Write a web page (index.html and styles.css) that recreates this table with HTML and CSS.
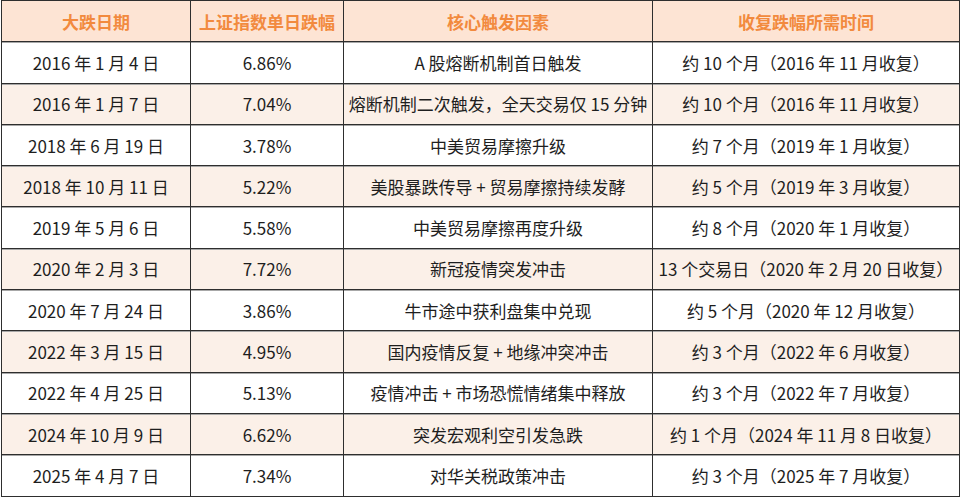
FILE: index.html
```html
<!DOCTYPE html>
<html lang="zh-CN">
<head>
<meta charset="utf-8">
<title>A股大跌统计</title>
<link rel="stylesheet" href="styles.css">
</head>
<body>
<table class="crash-table">
  <colgroup>
    <col class="c1"><col class="c2"><col class="c3"><col class="c4">
  </colgroup>
  <thead>
    <tr><th>大跌日期</th><th>上证指数单日跌幅</th><th>核心触发因素</th><th>收复跌幅所需时间</th></tr>
  </thead>
  <tbody>
    <tr><td>2016 年 1 月 4 日</td><td>6.86%</td><td>A 股熔断机制首日触发</td><td>约 10 个月（2016 年 11 月收复）</td></tr>
    <tr class="alt"><td>2016 年 1 月 7 日</td><td>7.04%</td><td>熔断机制二次触发，全天交易仅 15 分钟</td><td>约 10 个月（2016 年 11 月收复）</td></tr>
    <tr><td>2018 年 6 月 19 日</td><td>3.78%</td><td>中美贸易摩擦升级</td><td>约 7 个月（2019 年 1 月收复）</td></tr>
    <tr class="alt"><td>2018 年 10 月 11 日</td><td>5.22%</td><td>美股暴跌传导 + 贸易摩擦持续发酵</td><td>约 5 个月（2019 年 3 月收复）</td></tr>
    <tr><td>2019 年 5 月 6 日</td><td>5.58%</td><td>中美贸易摩擦再度升级</td><td>约 8 个月（2020 年 1 月收复）</td></tr>
    <tr class="alt"><td>2020 年 2 月 3 日</td><td>7.72%</td><td>新冠疫情突发冲击</td><td>13 个交易日（2020 年 2 月 20 日收复）</td></tr>
    <tr><td>2020 年 7 月 24 日</td><td>3.86%</td><td>牛市途中获利盘集中兑现</td><td>约 5 个月（2020 年 12 月收复）</td></tr>
    <tr class="alt"><td>2022 年 3 月 15 日</td><td>4.95%</td><td>国内疫情反复 + 地缘冲突冲击</td><td>约 3 个月（2022 年 6 月收复）</td></tr>
    <tr><td>2022 年 4 月 25 日</td><td>5.13%</td><td>疫情冲击 + 市场恐慌情绪集中释放</td><td>约 3 个月（2022 年 7 月收复）</td></tr>
    <tr class="alt"><td>2024 年 10 月 9 日</td><td>6.62%</td><td>突发宏观利空引发急跌</td><td>约 1 个月（2024 年 11 月 8 日收复）</td></tr>
    <tr><td>2025 年 4 月 7 日</td><td>7.34%</td><td>对华关税政策冲击</td><td>约 3 个月（2025 年 7 月收复）</td></tr>
  </tbody>
</table>
</body>
</html>
```

FILE: styles.css
```css
html, body {
  margin: 0;
  padding: 0;
  background: #ffffff;
}

.crash-table {
  margin: 0 0 0 1px;
  width: 958px;
  border-collapse: collapse;
  table-layout: fixed;
  font-family: "Noto Sans CJK SC", "Noto Sans", sans-serif;
  font-size: 17px;
  color: #1e1e1e;
}

.c1 { width: 189px; }
.c2 { width: 153px; }
.c3 { width: 309px; }
.c4 { width: 307px; }

.crash-table th,
.crash-table td {
  border: 1px solid #2e2e2e;
  height: 40.3px;
  padding: 0 2px;
  text-align: center;
  vertical-align: middle;
  white-space: nowrap;
  box-shadow: inset 0 1px 0 #a8a8a8;
}

.crash-table th {
  background: #fde4d4;
  color: #f28a3e;
  font-weight: bold;
  font-size: 17px;
  box-shadow: none;
}

.crash-table tr.alt td {
  background: #fbf0e8;
}
```
